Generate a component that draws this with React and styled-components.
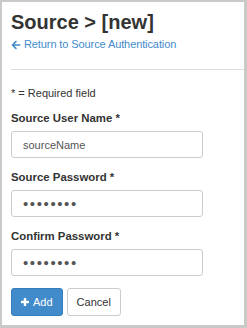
import React from 'react';
import styled, { createGlobalStyle } from 'styled-components';
import { FaArrowLeft } from 'react-icons/fa';

const Global = createGlobalStyle`
  html, body {
    margin: 0;
    padding: 0;
    background: #fff;
  }
  * {
    box-sizing: border-box;
  }
`;

const Frame = styled.div`
  width: 247px;
  height: 328px;
  border-style: solid;
  border-color: #c9c9c9;
  border-width: 2px 3px 3px 2px;
  background: #fff;
  padding: 9px 0 0 9px;
  font-family: 'Liberation Sans', Arial, sans-serif;
  color: #333;
  overflow: hidden;
`;

const Title = styled.h1`
  margin: 0 0 4px;
  font-size: 20px;
  line-height: 22px;
  font-weight: bold;
  color: #333;
`;

const BackLink = styled.a`
  display: flex;
  align-items: center;
  gap: 3px;
  font-size: 11px;
  letter-spacing: -0.1px;
  line-height: 15px;
  color: #428bca;
  text-decoration: none;
  cursor: pointer;

  svg {
    width: 10px;
    height: 10px;
  }
`;

const Rule = styled.hr`
  margin: 17px 0 16px;
  border: 0;
  border-top: 1px solid #ddd;
`;

const Note = styled.p`
  margin: 0 0 10px;
  font-size: 11px;
  line-height: 15px;
`;

const Group = styled.div`
  margin-bottom: 12px;
`;

const Label = styled.label`
  display: block;
  margin-bottom: 5px;
  font-size: 11.4px;
  line-height: 15px;
  font-weight: bold;
`;

const Input = styled.input`
  display: block;
  width: 192px;
  height: 27px;
  padding: 0 11px;
  border: 1px solid #ccc;
  border-radius: 3px;
  font-family: 'Liberation Sans', Arial, sans-serif;
  font-size: ${(p) => (p.type === 'password' ? '15px' : '11px')};
  letter-spacing: ${(p) => (p.type === 'password' ? '1.6px' : 'normal')};
  color: #555;
  outline: none;
`;

const Actions = styled.div`
  display: flex;
  gap: 4px;
`;

const Button = styled.button`
  display: flex;
  align-items: center;
  gap: 4px;
  height: 28px;
  padding: 0 9px;
  border-radius: 3px;
  border: 1px solid ${(p) => (p.primary ? '#357ebd' : '#ccc')};
  background: ${(p) => (p.primary ? '#428bca' : '#fff')};
  color: ${(p) => (p.primary ? '#fff' : '#333')};
  font-family: 'Liberation Sans', Arial, sans-serif;
  font-size: 11px;
  cursor: pointer;
`;

const PlusIcon = () => (
  <svg width="8" height="8" viewBox="0 0 8 8">
    <rect x="2.8" y="0" width="2.4" height="8" fill="#fff" />
    <rect x="0" y="2.8" width="8" height="2.4" fill="#fff" />
  </svg>
);

const App = () => {
  return (
    <Frame>
      <Global />
      <Title>Source &gt; [new]</Title>
      <BackLink>
        <FaArrowLeft />
        Return to Source Authentication
      </BackLink>
      <Rule />
      <Note>* = Required field</Note>
      <Group>
        <Label>Source User Name *</Label>
        <Input type="text" defaultValue="sourceName" />
      </Group>
      <Group>
        <Label>Source Password *</Label>
        <Input type="password" defaultValue="12345678" />
      </Group>
      <Group>
        <Label>Confirm Password *</Label>
        <Input type="password" defaultValue="12345678" />
      </Group>
      <Actions>
        <Button primary>
          <PlusIcon />
          Add
        </Button>
        <Button>Cancel</Button>
      </Actions>
    </Frame>
  );
};

export default App;
